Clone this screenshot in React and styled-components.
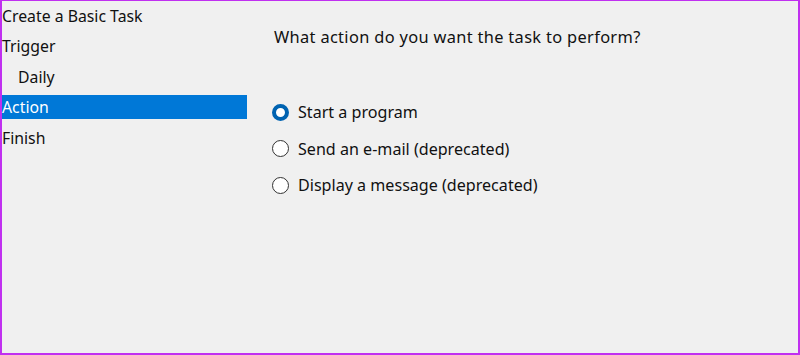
import styled, { createGlobalStyle } from 'styled-components';

const GlobalStyle = createGlobalStyle`
  html, body {
    margin: 0;
    padding: 0;
    background: #f0f0f0;
  }
  * {
    box-sizing: border-box;
  }
`;

const steps = [
  { label: 'Create a Basic Task' },
  { label: 'Trigger' },
  { label: 'Daily', indent: true },
  { label: 'Action', active: true },
  { label: 'Finish' },
];

const actions = [
  { label: 'Start a program', checked: true },
  { label: 'Send an e-mail (deprecated)' },
  { label: 'Display a message (deprecated)' },
];

export default function App() {
  return (
    <>
      <GlobalStyle />
      <Frame>
        <StepList>
          {steps.map(step => (
            <Step key={step.label} indent={step.indent} active={step.active}>
              {step.label}
            </Step>
          ))}
        </StepList>
        <Content>
          <Question>What action do you want the task to perform?</Question>
          <Options>
            {actions.map(action => (
              <Option key={action.label}>
                <Radio checked={action.checked} />
                {action.label}
              </Option>
            ))}
          </Options>
        </Content>
      </Frame>
    </>
  );
}

const Frame = styled.div`
  width: 800px;
  height: 355px;
  display: flex;
  background: #f0f0f0;
  border: 2px solid #c030f0;
  border-top-width: 1px;
  font-family: 'Noto Sans', 'Open Sans', sans-serif;
  font-size: 15.8px;
  color: #111111;
`;

const StepList = styled.ul`
  list-style: none;
  margin: 0;
  padding: 3px 0 0;
  width: 245px;
  display: flex;
  flex-direction: column;
  gap: 6.4px;
`;

const Step = styled.li`
  height: 24px;
  line-height: 24px;
  padding-left: ${props => (props.indent ? '16px' : '0')};
  background: ${props => (props.active ? '#0078d7' : 'transparent')};
  color: ${props => (props.active ? '#ffffff' : '#111111')};
  white-space: nowrap;
`;

const Content = styled.div`
  flex: 1;
  padding: 24px 0 0 25px;
  display: flex;
  flex-direction: column;
`;

const Question = styled.p`
  margin: 0;
  padding-left: 2px;
  height: 24px;
  line-height: 24px;
  font-size: 16.4px;
  letter-spacing: 0.33px;
  white-space: nowrap;
`;

const Options = styled.div`
  margin-top: 51px;
  display: flex;
  flex-direction: column;
  gap: 12.5px;
`;

const Option = styled.label`
  display: flex;
  align-items: center;
  gap: 9px;
  height: 24px;
  line-height: 24px;
  font-size: 16.1px;
  white-space: nowrap;
`;

const Radio = styled.span`
  width: 17px;
  height: 17px;
  border-radius: 50%;
  flex-shrink: 0;
  background: #ffffff;
  border: ${props => (props.checked ? '4.5px solid #0063b1' : '1px solid #333333')};
`;
